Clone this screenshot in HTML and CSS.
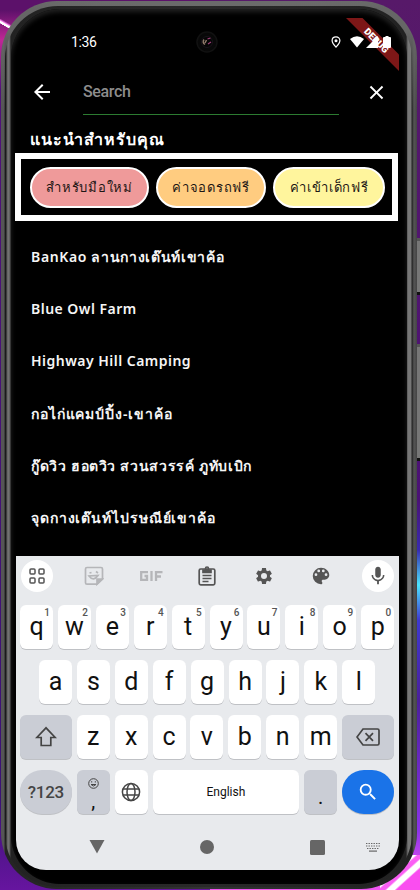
FILE: index.html
```html
<!DOCTYPE html>
<html lang="th">
<head>
<meta charset="utf-8">
<title>Search</title>
<link rel="stylesheet" href="styles.css">
</head>
<body>
<div class="side-button power"></div>
<div class="side-button volume"></div>
<main class="phone"><div class="rim"><div class="bezel"><div class="screen">
  <header class="status">
    <span class="time">1:36</span>
    <span class="camera"><svg width="22" height="22" viewBox="0 0 22 22"><circle cx="11" cy="11" r="10" fill="#080808" stroke="#111" stroke-width="1.5"/><circle cx="11" cy="11" r="5.5" fill="#050505" stroke="#18131a"/><path d="M8 8.500q-2 3 1 5M10.500 9l-1.500 3" stroke="#8d7868" fill="none" stroke-width="1.500"/><path d="M11.500 8l3-1M12 13l3-2" stroke="#a03f79" stroke-width="1.200"/></svg></span>
    <span class="status-icons">
      <svg width="10" height="12" viewBox="0 0 10 12"><path d="M5 .8C2.7.8 1.1 2.4 1.1 4.6 1.1 7.2 5 11.2 5 11.2s3.900-4 3.900-6.600C8.900 2.400 7.300.8 5 .8z" fill="none" stroke="#fff" stroke-width="1.200"/><circle cx="5" cy="4.700" r="1.500" fill="#fff"/></svg>
      <svg class="wifi" width="14" height="12" viewBox="0 0 14 12"><path d="M0 3Q7-2.500 14 3L7 11.500z" fill="#fff"/></svg>
      <svg class="cell" width="12" height="12" viewBox="0 0 12 12"><path d="M0 12L12 0v12z" fill="#fff"/></svg>
      <svg class="battery" width="8" height="12" viewBox="0 0 8 12"><path d="M2.500 0h3v1H7q1 0 1 1v9q0 1-1 1H1q-1 0-1-1V2q0-1 1-1h1.500z" fill="#fff"/></svg>
    </span>
  </header>
  <svg class="banner" width="53" height="53" viewBox="0 0 53 53"><path d="M0 0h16.500L53 36.500V53z" fill="#7d1717"/><text x="0" y="3.300" text-anchor="middle" transform="translate(30.500 22.500) rotate(45)">DEBUG</text></svg>
  <section class="search">
    <svg class="back" width="24" height="24" viewBox="0 0 24 24"><path d="M20 11H7.830l5.590-5.590L12 4l-8 8 8 8 1.410-1.410L7.830 13H20v-2z"/></svg>
    <div class="field">Search</div>
    <svg class="close" width="23" height="23" viewBox="0 0 24 24"><path d="M19 6.410L17.590 5 12 10.590 6.410 5 5 6.410 10.590 12 5 17.590 6.410 19 12 13.410 17.590 19 19 17.590 13.410 12z"/></svg>
  </section>
  <h1>แนะนำสำหรับคุณ</h1>
  <div class="chips">
    <span class="chip red">สำหรับมือใหม่</span>
    <span class="chip orange">ค่าจอดรถฟรี</span>
    <span class="chip yellow">ค่าเข้าเด็กฟรี</span>
  </div>
  <ul class="results">
    <li class="mixed">BanKao ลานกางเต๊นท์เขาค้อ</li>
    <li class="latin">Blue Owl Farm</li>
    <li class="latin">Highway Hill Camping</li>
    <li>กอไก่แคมป์ปิ้ง-เขาค้อ</li>
    <li class="mixed">กู๊ดวิว ฮอตวิว สวนสวรรค์ ภูทับเบิก</li>
    <li>จุดกางเต๊นท์ไปรษณีย์เขาค้อ</li>
  </ul>
  <section class="keyboard">
    <div class="tools">
      <span class="tool round"><svg width="16" height="16" viewBox="0 0 16 16" fill="none" stroke="#555" stroke-width="1.500"><rect x="1" y="1" width="5" height="5" rx="1"/><rect x="10" y="1" width="5" height="5" rx="1"/><rect x="1" y="10" width="5" height="5" rx="1"/><rect x="10" y="10" width="5" height="5" rx="1"/></svg></span>
      <span class="tool"><svg width="20" height="20" viewBox="0 0 20 20" fill="none" stroke="#b5b6b9" stroke-width="1.700"><path d="M13 18.200H3q-1.500 0-1.500-1.500V3Q1.500 1.500 3 1.500h14q1.500 0 1.500 1.500v10z"/><path d="M13 18.200V13h5.500z" fill="#b5b6b9"/><path d="M5 10q4.500 6 9-.5zM5.500 7l2-.5M12 5.500l2 1.500"/></svg></span>
      <span class="tool"><svg width="24" height="12" viewBox="0 0 24 12" fill="none" stroke="#b5b6b9" stroke-width="2.300"><path d="M9 2.200H2.200v7.600H8V6H5.500M12.500 1v10M17 11V2.200h6.500M17 6.500h5"/></svg></span>
      <span class="tool"><svg width="18" height="20" viewBox="0 0 18 20" fill="none" stroke="#555" stroke-width="1.700"><rect x="1.200" y="3" width="15.600" height="15.800" rx="1.500"/><path d="M5 4h8v2.500H5z" fill="#555"/><circle cx="9" cy="2.500" r="1.500"/><path d="M4.500 9.500h9M4.500 12.500h9M4.500 15.500h6" stroke-width="1.300"/></svg></span>
      <span class="tool"><svg width="20" height="20" viewBox="0 0 24 24" fill="#555"><path d="M19.140 12.940c.04-.3.060-.61.060-.94 0-.32-.02-.64-.07-.94l2.030-1.580c.18-.14.230-.41.120-.61l-1.920-3.320c-.12-.22-.37-.29-.59-.22l-2.390.96c-.5-.38-1.030-.7-1.620-.94l-.36-2.540c-.04-.24-.24-.41-.48-.41h-3.840c-.24 0-.43.170-.47.410l-.36 2.540c-.59.240-1.130.57-1.620.94l-2.390-.96c-.22-.08-.47 0-.59.220L2.740 8.870c-.12.210-.08.470.12.610l2.030 1.580c-.05.300-.09.630-.09.940s.02.640.07.940l-2.030 1.580c-.18.140-.23.410-.12.610l1.920 3.320c.12.220.37.290.59.220l2.390-.96c.5.380 1.030.7 1.620.94l.36 2.540c.05.240.24.410.48.410h3.840c.24 0 .44-.17.47-.41l.36-2.540c.59-.24 1.130-.56 1.620-.94l2.390.96c.22.080.47 0 .59-.22l1.920-3.320c.12-.22.070-.47-.12-.61zM12 15.600A3.600 3.600 0 1 1 12 8.400a3.600 3.600 0 0 1 0 7.200z"/></svg></span>
      <span class="tool"><svg width="22" height="22" viewBox="0 0 24 24" fill="#555"><path d="M12 3a9 9 0 0 0 0 18c.83 0 1.500-.67 1.500-1.500 0-.39-.15-.74-.39-1.010-.23-.26-.38-.61-.38-.99 0-.83.67-1.500 1.500-1.500H16c2.760 0 5-2.240 5-5 0-4.420-4.030-8-9-8zm-5.500 9a1.500 1.500 0 1 1 0-3 1.500 1.500 0 0 1 0 3zm3-4a1.500 1.500 0 1 1 0-3 1.500 1.500 0 0 1 0 3zm5 0a1.500 1.500 0 1 1 0-3 1.500 1.500 0 0 1 0 3zm3 4a1.500 1.500 0 1 1 0-3 1.500 1.500 0 0 1 0 3z"/></svg></span>
      <span class="tool round"><svg width="22" height="22" viewBox="0 0 24 24" fill="#555"><path d="M12 14c1.660 0 3-1.340 3-3V5c0-1.660-1.340-3-3-3S9 3.340 9 5v6c0 1.660 1.340 3 3 3zm5.300-3c0 3-2.540 5.100-5.300 5.100S6.700 14 6.700 11H5c0 3.410 2.720 6.230 6 6.720V21h2v-3.280c3.280-.48 6-3.300 6-6.720z"/></svg></span>
    </div>
    <div class="keys">
      <span class="key">q<sup>1</sup></span><span class="key">w<sup>2</sup></span><span class="key">e<sup>3</sup></span><span class="key">r<sup>4</sup></span><span class="key">t<sup>5</sup></span><span class="key">y<sup>6</sup></span><span class="key">u<sup>7</sup></span><span class="key">i<sup>8</sup></span><span class="key">o<sup>9</sup></span><span class="key">p<sup>0</sup></span>
    </div>
    <div class="keys middle">
      <span class="key">a</span><span class="key">s</span><span class="key">d</span><span class="key">f</span><span class="key">g</span><span class="key">h</span><span class="key">j</span><span class="key">k</span><span class="key">l</span>
    </div>
    <div class="keys">
      <span class="key wide grey"><svg width="22" height="22" viewBox="0 0 22 22" fill="none" stroke="#444" stroke-width="1.700"><path d="M11 1.800L1.800 11.500h4.400v8h9.600v-8h4.400z"/></svg></span><span class="key">z</span><span class="key">x</span><span class="key">c</span><span class="key">v</span><span class="key">b</span><span class="key">n</span><span class="key">m</span><span class="key wide grey"><svg width="24" height="18" viewBox="0 0 24 18" fill="none" stroke="#444" stroke-width="1.700"><path d="M7 1h14.500q1.500 0 1.500 1.500v13q0 1.500-1.500 1.500H7L1 9z"/><path d="M9.500 5.200l7.500 7.600M17 5.200l-7.500 7.600"/></svg></span>
    </div>
    <div class="keys">
      <span class="key wide grey pill symbols">?123</span>
      <span class="key grey comma"><svg width="11" height="11" viewBox="0 0 11 11" fill="none" stroke="#444"><circle cx="5.500" cy="5.500" r="4.800"/><path d="M3 6.500q2.500 3 5 0zM3.700 3.200v1.300M7.300 3.200v1.300"/></svg><span>,</span></span>
      <span class="key"><svg width="20" height="20" viewBox="0 0 20 20" fill="none" stroke="#444" stroke-width="1.500"><circle cx="10" cy="10" r="8.600"/><ellipse cx="10" cy="10" rx="4" ry="8.600"/><path d="M2 7h16M2 13h16"/></svg></span>
      <span class="key space">English</span>
      <span class="key grey dot">.</span>
      <span class="key wide pill go"><svg width="22" height="22" viewBox="0 0 24 24" fill="#fff"><path d="M15.500 14h-.79l-.28-.27A6.470 6.470 0 0 0 16 9.500 6.500 6.500 0 1 0 9.500 16c1.610 0 3.090-.59 4.230-1.570l.27.28v.79l5 4.990L20.490 19l-4.990-5zm-6 0a4.500 4.500 0 1 1 0-9 4.500 4.500 0 0 1 0 9z"/></svg></span>
    </div>
    <nav>
      <svg width="16" height="14" viewBox="0 0 16 14"><path d="M.5 0h15L8 13.500z"/></svg>
      <svg width="14" height="14" viewBox="0 0 14 14"><circle cx="7" cy="7" r="7"/></svg>
      <svg class="recent" width="15" height="15" viewBox="0 0 15 15"><rect width="15" height="15" rx="1.500"/></svg>
      <svg class="ime" width="16" height="10" viewBox="0 0 16 10"><path d="M1 1.500h14M1 4h14M2 6.500h12" stroke="#666" stroke-width="1.200" stroke-dasharray="1.400 1.100" fill="none"/><path d="M4 8.500h8v1.200H4z"/></svg>
    </nav>
  </section>
</div></div></div></main>
</body>
</html>
```
FILE: styles.css
```css
* { box-sizing: border-box; }
body {
  margin: 0; width: 420px; height: 890px; overflow: hidden; position: relative;
  padding: 1px 3px 1px 1px;
  font-family: Roboto, "Liberation Sans", sans-serif;
  background:
    linear-gradient(30deg, transparent 47%, #fff 48% 53%, #ff8cf4 55%, transparent 60%) 0 14px / 20px 28px no-repeat,
    linear-gradient(-42deg, #fa4df0 30%, #fff 33% 42%, #fa5ef4 45% 52%, #fff 55% 62%, transparent 64%) 380px 855px / 40px 35px no-repeat,
    linear-gradient(#5c116a 0 10px, #c02796 40px, #51127a 90px, #3b1276 800px, #66159f) 0 0 / 210px 890px no-repeat,
    linear-gradient(#571969 0, #4b1275 500px, #382bb0 550px, #4be4ff 585px, #3e39d0 620px, #4b209c 700px, #8a33e8 830px, #f156f2 880px) 210px 0 / 210px 890px no-repeat;
}
.side-button { position: absolute; left: 415px; width: 5px; background: #777; border-top: 3px solid #555; border-bottom: 3px solid #111; }
.power { top: 238px; height: 57px; }
.volume { top: 344px; height: 117px; }
.phone {
  position: relative; width: 416px; height: 888px; padding: 5px 5px 2px 4px; border-radius: 56px;
  background:
    radial-gradient(ellipse at top, #6b6b6b 40%, #6b6b6b00 100%) 20px 0 / 376px 7px no-repeat,
    linear-gradient(#666 0 30px, #6660 110px),
    linear-gradient(90deg, #555 0 3px, #242424 4px, #333 50%, #222 411px, #555 413px, #444 416px);
}
.rim {
  height: 881px; padding: 3px 5px 3px 6px; border-radius: 53px;
  background: linear-gradient(90deg, #1a1a1a 0 1px, #606060 2px, #777 4px, #222 6px, #292929 50%, #222 401px, #777 403px 406px, #222 407px);
}
.bezel { height: 875px; padding: 9px 7px 10px 5px; border-radius: 49px; background: #000; box-shadow: inset 0 3px 5px #222; }
.screen { position: relative; width: 383px; height: 852px; display: flex; flex-direction: column; color: #fff; border-radius: 0 0 30px 30px; }
.status { height: 48px; display: flex; align-items: center; padding: 0 8px 0 55px; flex: none; }
.time { width: 125px; font-size: 14px; letter-spacing: -.4px; }
.camera { display: flex; width: 22px; }
.camera svg, .status-icons svg { display: block; flex: none; }
.status-icons { display: flex; margin-left: auto; align-items: center; position: relative; z-index: 4; }
.wifi { margin-left: 9px; }
.cell { margin-left: 2px; }
.battery { margin-left: 5px; }
.banner { position: absolute; right: 0; top: 0; z-index: 3; }
.banner text { font: 900 9.500px Roboto, sans-serif; fill: #fff; }
.search { height: 52px; display: flex; align-items: center; padding: 0 11px 0 14px; flex: none; }
.search svg { fill: #fff; flex: none; }
.field { width: 257px; height: 45px; margin: 0 26px 0 29px; border-bottom: 1.500px solid #2c7b31; color: #8d8d8d; font: 500 16px/43px Roboto, sans-serif; letter-spacing: -.35px; }
h1, .chip, .results { font-family: "Noto Sans", "Liberation Sans", sans-serif; }
h1 { margin: 0; height: 35px; padding-left: 14px; font-size: 16px; line-height: 42px; font-weight: 600; letter-spacing: .970px; white-space: nowrap; flex: none; }
.chips { width: 383px; height: 68px; margin-left: -1px; border: 6px solid #fff; padding: 8px 0 0 9px; display: flex; gap: 7px; flex: none; }
.chip { height: 41px; border: 2px solid #fff; border-radius: 21px; color: #1d1715; display: flex; align-items: center; justify-content: center; white-space: nowrap; font-size: 13px; font-weight: 500; flex: none; letter-spacing: .680px; }
.red { width: 119px; background: #ef9a9a; letter-spacing: .750px; }
.orange { width: 110px; background: #ffcc80; }
.yellow { width: 112px; background: #fff59d; }
.results { list-style: none; margin: 10px 0 0; padding: 0 0 0 15px; height: 325px; font-size: 14px; font-weight: 600; color: #f5f5f5; flex: none; }
.results li { height: 52.200px; line-height: 52px; white-space: nowrap; letter-spacing: .9px; }
.results .mixed { letter-spacing: .650px; }
.results .latin { letter-spacing: .480px; }
.keyboard { height: 314px; background: #e8eaed; border-radius: 0 0 30px 30px; color: #111; padding: 4px 4px 0; flex: none; }
.tools { height: 45px; display: flex; justify-content: space-between; padding: 0 1px; }
.tool { width: 32px; height: 32px; display: flex; align-items: center; justify-content: center; }
.round { background: #fff; border-radius: 50%; }
.keys { height: 55px; display: flex; gap: 4.920px; }
.middle { padding-left: 19px; }
.key { position: relative; width: 33px; height: 43.500px; border-radius: 6px; background: #fff; box-shadow: 0 1px 0 #bfc1c5; display: flex; align-items: center; justify-content: center; font-size: 25px; line-height: 44px; flex: none; }
.key sup { position: absolute; right: 3px; top: 2px; font-size: 10px; line-height: 12px; color: #555; font-weight: 500; }
.wide { width: 51.800px; }
.grey { background: #cacdd5; }
.pill { border-radius: 24px; }
.symbols { color: #444; font-size: 17px; font-weight: 500; letter-spacing: -.3px; }
.comma { flex-direction: column; justify-content: flex-start; padding-top: 8px; line-height: 24px; font-size: 20px; }
.comma svg, .comma span { flex: none; }
.space { width: 146.800px; font-size: 12px; }
.dot { padding-top: 10px; font-size: 20px; }
.go { background: #1a73e8; }
nav { height: 40px; margin-top: 1px; padding: 2px 0 0 69px; display: flex; align-items: center; gap: 95px; fill: #666; }
nav svg { display: block; flex: none; }
.recent { margin-left: 1px; }
.ime { margin-left: -55px; }
```
